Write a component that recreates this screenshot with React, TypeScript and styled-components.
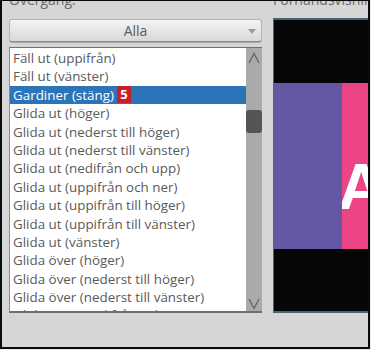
import styled, { createGlobalStyle } from "styled-components";

const items = [
  "Fäll ut (uppifrån)",
  "Fäll ut (vänster)",
  "Gardiner (stäng)",
  "Glida ut (höger)",
  "Glida ut (nederst till höger)",
  "Glida ut (nederst till vänster)",
  "Glida ut (nedifrån och upp)",
  "Glida ut (uppifrån och ner)",
  "Glida ut (uppifrån till höger)",
  "Glida ut (uppifrån till vänster)",
  "Glida ut (vänster)",
  "Glida över (höger)",
  "Glida över (nederst till höger)",
  "Glida över (nederst till vänster)",
  "Glida över (nedifrån och upp)",
];

const SELECTED = 2;

export default function App() {
  return (
    <>
      <GlobalStyle />
      <Frame>
        <Column>
          <Label>Övergång:</Label>
          <Dropdown>
            <span>Alla</span>
            <Caret />
          </Dropdown>
          <ListBox>
            <Rows>
              {items.map((text, i) => (
                <Row key={text} selected={i === SELECTED}>
                  {text}
                  {i === SELECTED && <Badge>5</Badge>}
                </Row>
              ))}
            </Rows>
            <ScrollTrack>
              <Arrow viewBox="0 0 16 12">
                <path d="M3 11 L8 1.5 L13 11" />
              </Arrow>
              <Thumb />
              <Arrow viewBox="0 0 16 12">
                <path d="M3 1 L8 10.5 L13 1" />
              </Arrow>
            </ScrollTrack>
          </ListBox>
        </Column>
        <Column>
          <Label>Förhandsvisning</Label>
          <Preview>
            <Slide>
              <SlidePart color="#6457a4" />
              <SlidePart color="#ec4585" grow>
                <SlideLetter>A</SlideLetter>
              </SlidePart>
            </Slide>
          </Preview>
        </Column>
      </Frame>
    </>
  );
}

const GlobalStyle = createGlobalStyle`
  body {
    margin: 0;
    background: #e9e9e9;
    font-family: "Open Sans", "Noto Sans", sans-serif;
  }
`;

const Frame = styled.div`
  box-sizing: border-box;
  width: 370px;
  height: 349px;
  border: 2px solid #0a0a0a;
  border-top-width: 1px;
  border-right-width: 2px;
  background: #d6d6d6;
  overflow: hidden;
  display: grid;
  grid-template-columns: 253px 1fr;
  column-gap: 11px;
  padding-left: 7px;
`;

const Column = styled.div`
  display: flex;
  flex-direction: column;
  min-width: 0;
`;

const Label = styled.div`
  margin-top: -9px;
  height: 16px;
  line-height: 16px;
  font-size: 14px;
  color: #6a6a6a;
  white-space: nowrap;
`;

const Dropdown = styled.div`
  box-sizing: border-box;
  margin-top: 11px;
  height: 23px;
  border: 1px solid #b4b4b4;
  border-bottom-color: #8e8e8e;
  border-radius: 3px;
  background: linear-gradient(#f3f3f3, #e6e6e6 50%, #d9d9d9);
  box-shadow: 0 1px 0 #a9a9a9;
  position: relative;
  display: flex;
  align-items: center;
  justify-content: center;
  font-size: 14px;
  color: #5b5b5b;
`;

const Caret = styled.span`
  position: absolute;
  right: 5px;
  top: 9px;
  width: 0;
  height: 0;
  border-left: 4px solid transparent;
  border-right: 4px solid transparent;
  border-top: 5px solid #9a9a9a;
`;

const ListBox = styled.div`
  box-sizing: border-box;
  margin-top: 5px;
  height: 266px;
  background: #fff;
  border: 1px solid #8c8c8c;
  border-top-color: #6f6f6f;
  border-bottom: 2px solid #6f6f6f;
  border-right: none;
  display: flex;
  overflow: hidden;
`;

const Rows = styled.div`
  flex: 1;
  padding-top: 1px;
  overflow: hidden;
`;

const Row = styled.div<{ selected?: boolean }>`
  height: 18.4px;
  line-height: 18.4px;
  padding-left: 3px;
  font-size: 13.4px;
  white-space: nowrap;
  display: flex;
  align-items: center;
  color: ${(p) => (p.selected ? "#ffffff" : "#5a5a5a")};
  background: ${(p) => (p.selected ? "#2b74b8" : "transparent")};
`;

const Badge = styled.span`
  margin-left: 3px;
  width: 14px;
  height: 17px;
  background: #c8202b;
  color: #fff;
  font-weight: 700;
  font-size: 13px;
  line-height: 17px;
  text-align: center;
`;

const ScrollTrack = styled.div`
  width: 16px;
  background: #a9aaa9;
  display: flex;
  flex-direction: column;
  align-items: center;
  padding: 4px 0 1px;
  box-sizing: border-box;
`;

const Arrow = styled.svg`
  width: 16px;
  height: 12px;
  flex: none;
  fill: none;
  stroke: #5f5f5f;
  stroke-width: 1.2;

  &:last-child {
    margin-top: auto;
  }
`;

const Thumb = styled.div`
  margin-top: 46px;
  width: 16px;
  height: 23px;
  border-radius: 3px;
  background: #545557;
`;

const Preview = styled.div`
  box-sizing: border-box;
  margin-top: 10px;
  height: 295px;
  background: #050608;
  border: 2px solid #4b6670;
  border-left-width: 1px;
  border-right: none;
  display: flex;
  flex-direction: column;
  justify-content: center;
`;

const Slide = styled.div`
  height: 166px;
  display: flex;
`;

const SlidePart = styled.div<{ color: string; grow?: boolean }>`
  width: ${(p) => (p.grow ? "auto" : "68px")};
  flex: ${(p) => (p.grow ? 1 : "none")};
  background: ${(p) => p.color};
  overflow: hidden;
  position: relative;
`;

const SlideLetter = styled.span`
  position: absolute;
  left: -4px;
  top: 72px;
  font-family: "Liberation Sans", Arial, sans-serif;
  font-weight: 700;
  font-size: 64px;
  line-height: 64px;
  color: #fff;
`;
